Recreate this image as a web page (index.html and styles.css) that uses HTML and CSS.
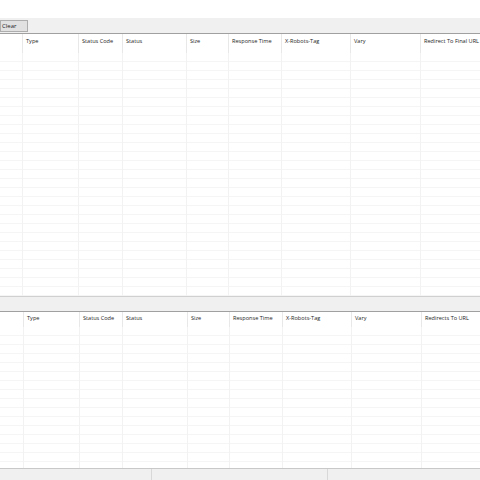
FILE: index.html
```html
<!DOCTYPE html>
<html lang="en">

<head>
    <meta charset="UTF-8">
    <title>Response Codes</title>
    <link rel="stylesheet" href="styles.css">
</head>

<body>
    <div class="window">
        <div class="blank"></div>

        <div class="toolbar">
            <button class="btn">Clear</button>
        </div>

        <!-- upper grid -->
        <div class="grid upper">
            <div class="head">
                <div class="th"></div>
                <div class="th">Type</div>
                <div class="th">Status Code</div>
                <div class="th">Status</div>
                <div class="th">Size</div>
                <div class="th">Response Time</div>
                <div class="th">X-Robots-Tag</div>
                <div class="th">Vary</div>
                <div class="th">Redirect To Final URL</div>
            </div>
            <div class="rows">
                <div class="col"></div>
                <div class="col"></div>
                <div class="col"></div>
                <div class="col"></div>
                <div class="col"></div>
                <div class="col"></div>
                <div class="col"></div>
                <div class="col"></div>
                <div class="col"></div>
            </div>
        </div>

        <div class="splitter"></div>

        <!-- lower grid -->
        <div class="grid lower">
            <div class="head">
                <div class="th"></div>
                <div class="th">Type</div>
                <div class="th">Status Code</div>
                <div class="th">Status</div>
                <div class="th">Size</div>
                <div class="th">Response Time</div>
                <div class="th">X-Robots-Tag</div>
                <div class="th">Vary</div>
                <div class="th">Redirects To URL</div>
            </div>
            <div class="rows">
                <div class="col"></div>
                <div class="col"></div>
                <div class="col"></div>
                <div class="col"></div>
                <div class="col"></div>
                <div class="col"></div>
                <div class="col"></div>
                <div class="col"></div>
                <div class="col"></div>
            </div>
        </div>

        <div class="statusbar">
            <div class="cell first"></div>
            <div class="cell"></div>
            <div class="cell last"></div>
        </div>
    </div>
</body>

</html>
```

FILE: styles.css
```css
/* General styles */
body {
    margin: 0;
    padding: 0;
    background: #ffffff;
    font-family: 'Open Sans', 'Noto Sans', sans-serif;
}

.window {
    width: 480px;
    height: 480px;
    display: flex;
    flex-direction: column;
    overflow: hidden;
}

.blank {
    height: 18px;
    background: #ffffff;
}

/* Toolbar */
.toolbar {
    height: 15px;
    background: #f0f0f0;
    display: flex;
    align-items: center;
    padding-top: 1px;
    box-sizing: border-box;
}

.btn {
    width: 28px;
    height: 12px;
    margin: 0;
    padding: 0 0 0 1px;
    border: 1px solid #adadad;
    background: #e1e1e1;
    font-family: inherit;
    font-size: 6px;
    color: #222222;
    text-align: left;
    line-height: 10px;
}

/* Grids */
.grid {
    display: flex;
    flex-direction: column;
    border-top: 1px solid #a0a0a0;
    background: #ffffff;
}

.upper {
    height: 262px;
}

.lower {
    height: 156px;
}

.upper .head,
.upper .rows {
    display: grid;
    grid-template-columns: 23px 56px 44px 64px 42px 53px 69px 70px 1fr;
}

.lower .head,
.lower .rows {
    display: grid;
    grid-template-columns: 24px 56px 43px 65px 42px 53px 69px 70px 1fr;
}

.head {
    height: 19px;
}

.th {
    border-right: 1px solid #e8e8e8;
    font-size: 5.6px;
    color: #1e1e1e;
    padding: 3px 0 0 3px;
    white-space: nowrap;
    overflow: hidden;
}

.th:last-child {
    border-right: none;
}

.rows {
    flex: 1;
}

.col {
    border-right: 1px solid #f2f2f2;
    background: repeating-linear-gradient(to bottom,
            #ffffff 0px,
            #ffffff 8px,
            #f5f5f5 8px,
            #f5f5f5 9px);
}

.col:last-child {
    border-right: none;
}

.lower .head {
    height: 15px;
}

.lower .th {
    padding-top: 2px;
}

/* Splitter between the two grids */
.splitter {
    height: 15px;
    background: #f0f0f0;
    border-top: 1px solid #d0d0d0;
    box-sizing: border-box;
}

/* Status bar */
.statusbar {
    flex: 1;
    display: flex;
    background: #f0f0f0;
    border-top: 1px solid #c8c8c8;
}

.statusbar .cell {
    flex: none;
    border-right: 1px solid #d8d8d8;
}

.statusbar .first {
    width: 151px;
}

.statusbar .cell:nth-child(2) {
    width: 175px;
}

.statusbar .last {
    flex: 1;
    border-right: none;
}
```
